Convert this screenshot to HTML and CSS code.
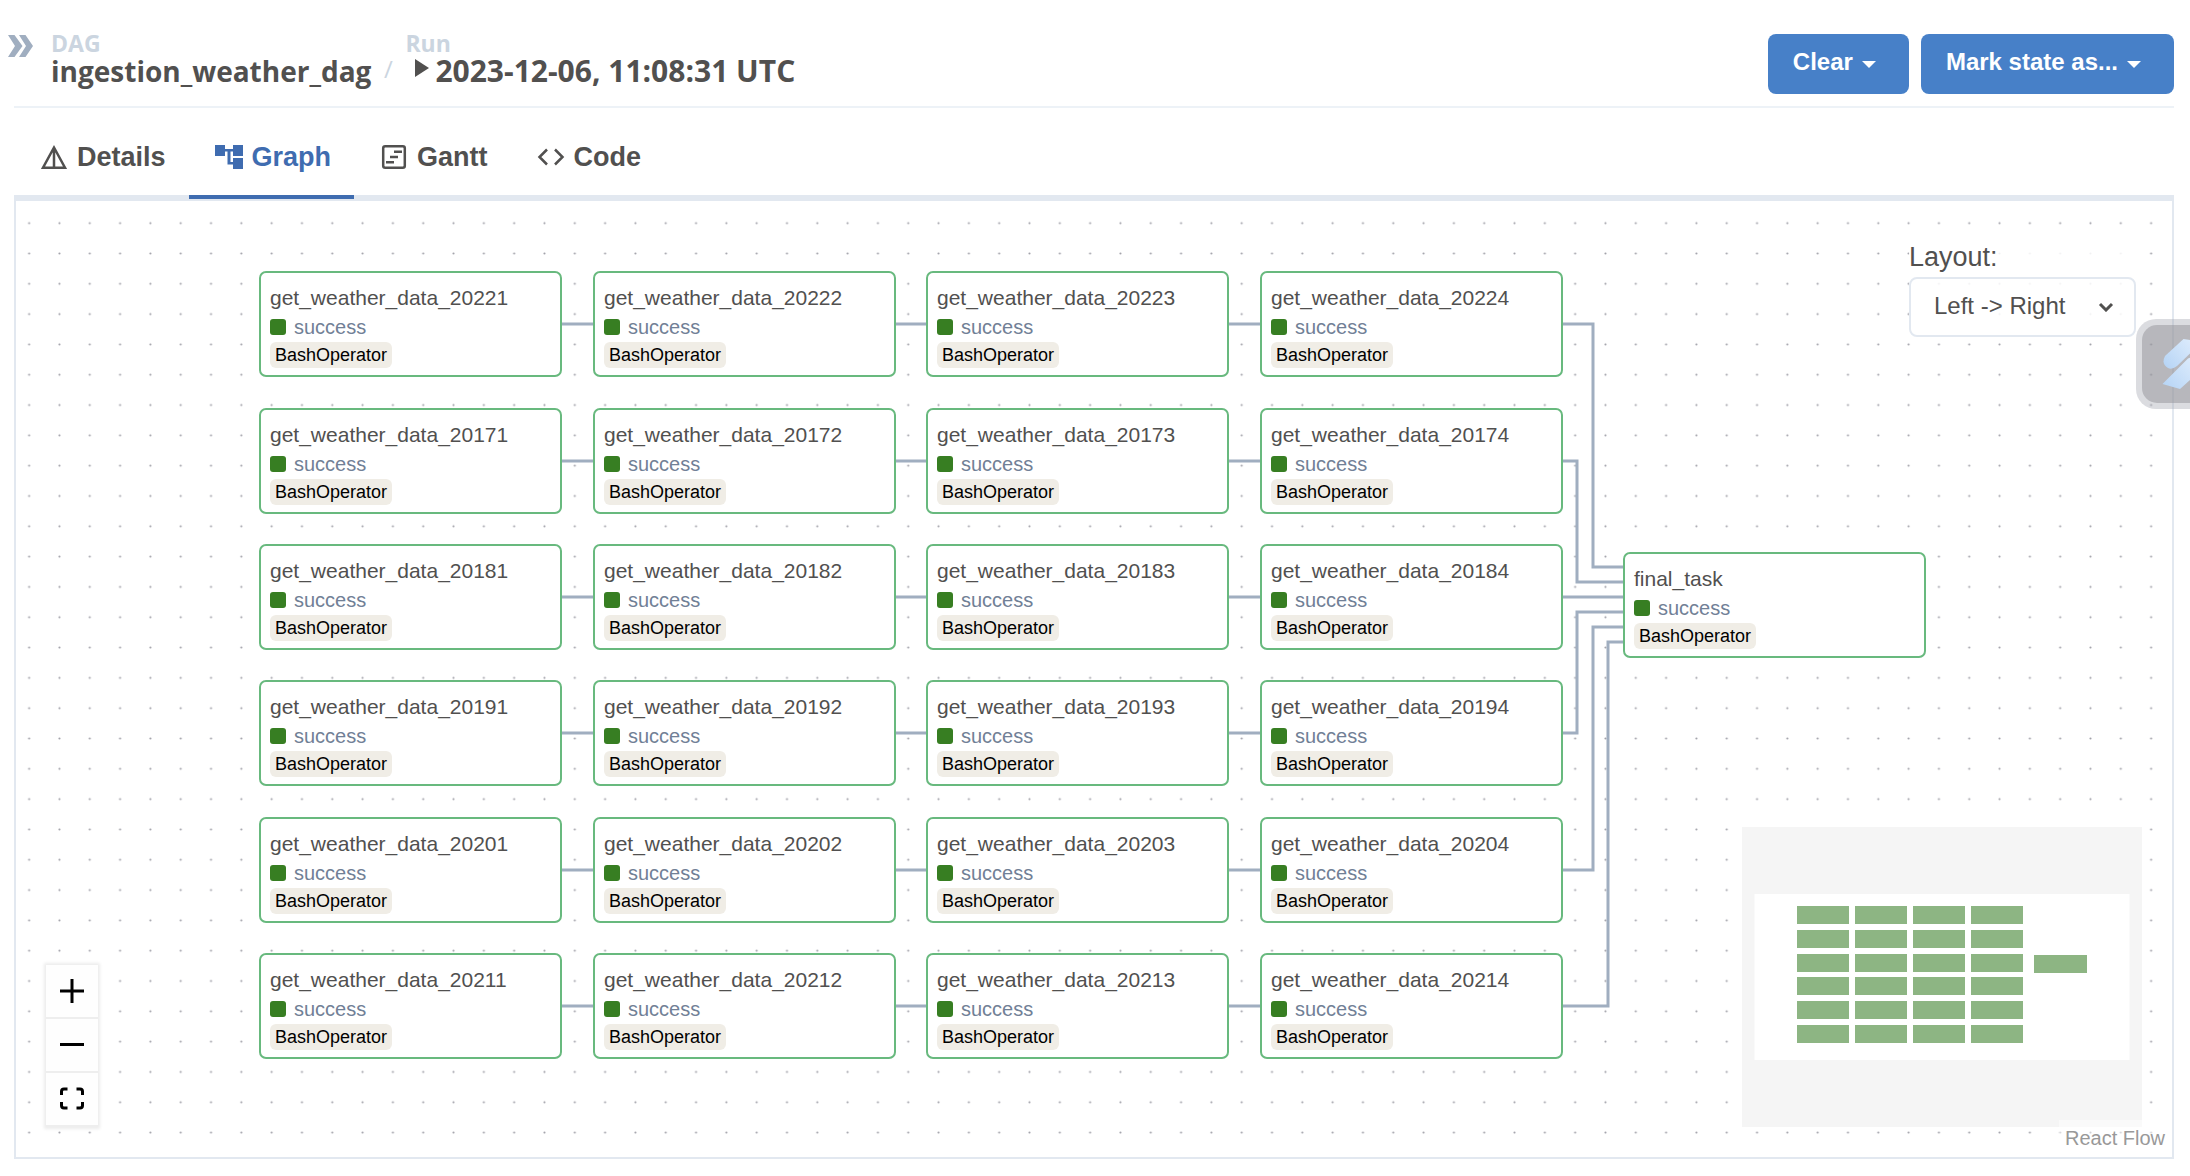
FILE: index.html
```html
<!DOCTYPE html>
<html lang="en">
<head>
<meta charset="utf-8">
<title>ingestion_weather_dag - Airflow</title>
<link rel="stylesheet" href="styles.css">
</head>
<body>
<header class="header">
  <button class="expand" aria-label="Show grid"><svg width="25" height="22" viewBox="0 0 25 22"><path d="M0 0h6.500l8 11-8 11H0l7-11zM11 0h6.500l7.500 11-7.500 11H11l7-11z"/></svg></button>
  <nav class="crumbs" aria-label="Breadcrumb">
    <a class="crumb" href="#"><span class="crumb-label">DAG</span><span class="crumb-title">ingestion_weather_dag</span></a>
    <span class="slash">/</span>
    <a class="crumb" href="#"><span class="crumb-label">Run</span><span class="crumb-title run"><svg class="play" width="14" height="18" viewBox="0 0 14 18"><path d="M0 0l14 9L0 18z"/></svg>2023-12-06, 11:08:31 UTC</span></a>
  </nav>
  <div class="actions">
    <button class="btn">Clear<span class="caret"></span></button>
    <button class="btn">Mark state as...<span class="caret"></span></button>
  </div>
</header>
<hr class="rule">
<main class="panel">
  <div class="tabs" role="tablist">
    <button class="tab" role="tab"><svg width="28" height="28" viewBox="0 0 28 28" fill="none" stroke="currentColor" stroke-width="2.500"><path d="M14 4.500L3 24.700h22zM14 5v19"/></svg>Details</button>
    <button class="tab active" role="tab" aria-selected="true"><svg width="28" height="28" viewBox="0 0 28 28" fill="currentColor"><path d="M0 2h10v4h8V2h10v11H18V8.500h-2.500V19H18v-4h10v11H18v-4.500h-5.500v-13H10V13H0z"/></svg>Graph</button>
    <button class="tab" role="tab"><svg width="28" height="28" viewBox="0 0 28 28" fill="none" stroke="currentColor" stroke-width="2.500"><rect x="3.200" y="3.200" width="21.600" height="21.600" rx="2"/><path d="M14 8.700h8M10 14h8M6 19.300h8"/></svg>Gantt</button>
    <button class="tab" role="tab"><svg width="28" height="28" viewBox="0 0 28 28" fill="none" stroke="currentColor" stroke-width="2.500"><path d="M10 6.500L2.500 14l7.500 7.500M18 6.500l7.500 7.500-7.500 7.500"/></svg>Code</button>
  </div>
  <section class="flow">
    <svg class="layer" width="100%" height="100%">
      <defs><pattern id="dots" width="20" height="20" patternUnits="userSpaceOnUse" patternTransform="translate(-2 7) scale(1.5157)"><circle cx="10" cy="10" r="0.700" fill="#a0a0a8"/></pattern></defs>
      <rect width="100%" height="100%" fill="url(#dots)"/>
      <g class="edges">
        <path d="M546 123h31M879 123h31M1213 123h31"/>
        <path d="M546 260h31M879 260h31M1213 260h31"/>
        <path d="M546 396h31M879 396h31M1213 396h31"/>
        <path d="M546 532h31M879 532h31M1213 532h31"/>
        <path d="M546 669h31M879 669h31M1213 669h31"/>
        <path d="M546 805h31M879 805h31M1213 805h31"/>
        <path d="M1546 123H1577V366H1608"/>
        <path d="M1546 260H1561V381H1608"/>
        <path d="M1546 396H1608"/>
        <path d="M1546 532H1561V411H1608"/>
        <path d="M1546 669H1577V426H1608"/>
        <path d="M1546 805H1592V441H1608"/>
      </g>
    </svg>
    <div class="node c1 r1"><span class="name">get_weather_data_20221</span><span class="state">success</span><span class="op">BashOperator</span></div>
    <div class="node c2 r1"><span class="name">get_weather_data_20222</span><span class="state">success</span><span class="op">BashOperator</span></div>
    <div class="node c3 r1"><span class="name">get_weather_data_20223</span><span class="state">success</span><span class="op">BashOperator</span></div>
    <div class="node c4 r1"><span class="name">get_weather_data_20224</span><span class="state">success</span><span class="op">BashOperator</span></div>
    <div class="node c1 r2"><span class="name">get_weather_data_20171</span><span class="state">success</span><span class="op">BashOperator</span></div>
    <div class="node c2 r2"><span class="name">get_weather_data_20172</span><span class="state">success</span><span class="op">BashOperator</span></div>
    <div class="node c3 r2"><span class="name">get_weather_data_20173</span><span class="state">success</span><span class="op">BashOperator</span></div>
    <div class="node c4 r2"><span class="name">get_weather_data_20174</span><span class="state">success</span><span class="op">BashOperator</span></div>
    <div class="node c1 r3"><span class="name">get_weather_data_20181</span><span class="state">success</span><span class="op">BashOperator</span></div>
    <div class="node c2 r3"><span class="name">get_weather_data_20182</span><span class="state">success</span><span class="op">BashOperator</span></div>
    <div class="node c3 r3"><span class="name">get_weather_data_20183</span><span class="state">success</span><span class="op">BashOperator</span></div>
    <div class="node c4 r3"><span class="name">get_weather_data_20184</span><span class="state">success</span><span class="op">BashOperator</span></div>
    <div class="node c1 r4"><span class="name">get_weather_data_20191</span><span class="state">success</span><span class="op">BashOperator</span></div>
    <div class="node c2 r4"><span class="name">get_weather_data_20192</span><span class="state">success</span><span class="op">BashOperator</span></div>
    <div class="node c3 r4"><span class="name">get_weather_data_20193</span><span class="state">success</span><span class="op">BashOperator</span></div>
    <div class="node c4 r4"><span class="name">get_weather_data_20194</span><span class="state">success</span><span class="op">BashOperator</span></div>
    <div class="node c1 r5"><span class="name">get_weather_data_20201</span><span class="state">success</span><span class="op">BashOperator</span></div>
    <div class="node c2 r5"><span class="name">get_weather_data_20202</span><span class="state">success</span><span class="op">BashOperator</span></div>
    <div class="node c3 r5"><span class="name">get_weather_data_20203</span><span class="state">success</span><span class="op">BashOperator</span></div>
    <div class="node c4 r5"><span class="name">get_weather_data_20204</span><span class="state">success</span><span class="op">BashOperator</span></div>
    <div class="node c1 r6"><span class="name">get_weather_data_20211</span><span class="state">success</span><span class="op">BashOperator</span></div>
    <div class="node c2 r6"><span class="name">get_weather_data_20212</span><span class="state">success</span><span class="op">BashOperator</span></div>
    <div class="node c3 r6"><span class="name">get_weather_data_20213</span><span class="state">success</span><span class="op">BashOperator</span></div>
    <div class="node c4 r6"><span class="name">get_weather_data_20214</span><span class="state">success</span><span class="op">BashOperator</span></div>
    <div class="node final"><span class="name">final_task</span><span class="state">success</span><span class="op">BashOperator</span></div>

    <div class="layout-box">
      <label for="layout">Layout:</label>
      <div class="select-wrap">
        <select id="layout"><option>Left -&gt; Right</option></select>
        <svg class="chevron" width="16" height="10" viewBox="0 0 16 10"><path d="M2 2l6 6 6-6"/></svg>
      </div>
    </div>

    <div class="controls">
      <button aria-label="Zoom in"><svg width="24" height="24" viewBox="0 0 24 24"><path d="M0 12h24M12 0v24"/></svg></button>
      <button aria-label="Zoom out"><svg width="24" height="24" viewBox="0 0 24 24"><path d="M0 11.500h24"/></svg></button>
      <button aria-label="Fit view"><svg width="24" height="24" viewBox="0 0 24 24"><path d="M1.500 8V4.500q0-2.500 2.500-2.500h3.500M16.500 2H20q2.500 0 2.500 2.500V8M22.500 15v3.500q0 2.500-2.500 2.500h-3.500M7.500 21H4q-2.500 0-2.500-2.500V15"/></svg></button>
    </div>

    <svg class="minimap" width="400" height="300" viewBox="0 0 400 300" role="img" aria-label="Mini map">
      <rect width="400" height="300" fill="#f5f5f5"/>
      <rect x="12.500" y="67" width="375" height="166" fill="#fff"/>
      <defs><g id="map-row"><path d="M55 0h52v18H55zM113 0h52v18h-52zM171 0h52v18h-52zM229 0h52v18h-52z"/></g></defs>
      <g fill="#8db583">
        <use href="#map-row" y="79"/><use href="#map-row" y="103"/><use href="#map-row" y="127"/>
        <use href="#map-row" y="150"/><use href="#map-row" y="174"/><use href="#map-row" y="198"/>
        <rect x="292" y="128" width="53" height="18"/>
      </g>
    </svg>
    <a class="attribution" href="#">React Flow</a>
  </section>
</main>
<button class="widget" aria-label="Open assistant">
  <svg width="48" height="78" viewBox="6 6 48 78">
    <defs><linearGradient id="ice" x1="0" y1="1" x2="1" y2="0"><stop offset="0" stop-color="#b4d3f5"/><stop offset="1" stop-color="#dcebfc"/></linearGradient></defs>
    <path fill="url(#ice)" d="M29 37L47.500 20l7 1v13L41 47q-5 4-9 2-7-4-3-12z"/>
    <path fill="url(#ice)" d="M26.500 65L52 39.500l3-1V60L44 70z"/>
  </svg>
</button>
</body>
</html>
```
FILE: styles.css
```css
* { box-sizing: border-box; }

body {
  margin: 0;
  min-height: 100vh;
  display: flex;
  flex-direction: column;
  background: #fff;
  color: #51504f;
  font-family: "Liberation Sans", Arial, sans-serif;
  overflow-x: hidden;
}

button { font: inherit; color: inherit; border: 0; background: none; padding: 0; cursor: pointer; }
a { color: inherit; text-decoration: none; }
svg { display: block; flex: none; }

.header { display: flex; align-items: flex-start; padding: 30px 16px 12px 8px; }
.expand { margin: 5px 18px 0 0; fill: #a0aec0; }
.crumbs { display: flex; font-family: "Open Sans", "Noto Sans", sans-serif; }
.crumb { display: block; font-weight: 700; white-space: nowrap; }
.crumb-label { display: block; font-size: 23px; line-height: 26px; color: #cbd5e0; }
.crumb-title { display: block; font-size: 28px; line-height: 30px; }
.slash { align-self: flex-end; width: 34px; text-align: center; font-size: 24px; line-height: 34px; color: #cbd5e0; }
.run { display: flex; gap: 6px; padding-left: 10px; font-size: 30px; }
.play { fill: #51504f; margin-top: 3px; }

.actions { display: flex; gap: 12px; margin: 4px 0 0 auto; }
.btn {
  display: flex;
  align-items: center;
  gap: 9px;
  height: 60px;
  padding: 0 33px 4px 25px;
  border-radius: 8px;
  background: #4780c8;
  color: #fff;
  font-size: 24px;
  font-weight: 700;
}
.caret { border: 7px solid transparent; border-top-color: #fff; border-bottom: 0; margin-top: 4px; }

.rule { width: auto; height: 2px; margin: 0 16px 0 14px; border: 0; background: #edf2f7; }

.panel { flex: 1; display: flex; flex-direction: column; padding: 11px 16px 17px 14px; }
.tabs { display: flex; border-bottom: 4px solid #e2e8f0; }
.tab {
  display: flex;
  align-items: center;
  gap: 9px;
  height: 80px;
  margin-bottom: -4px;
  padding: 0 23px 0 26px;
  border-bottom: 4px solid transparent;
  font-size: 27px;
  font-weight: 700;
}
.active { color: #3f6cb0; border-color: #3f6cb0; }

.flow { position: relative; flex: 1; min-height: 900px; border: 2px solid #e2e8f0; overflow: hidden; }
.layer { position: absolute; inset: 0; }
.edges { fill: none; stroke: #a0aec0; stroke-width: 3; }

.node {
  position: absolute;
  display: flex;
  flex-direction: column;
  align-items: flex-start;
  width: 303px;
  height: 106px;
  padding: 9px;
  border: 2px solid #68b97e;
  border-radius: 7px;
  background: #fff;
}
.c1 { left: 243px; }
.c2 { left: 577px; }
.c3 { left: 910px; }
.c4 { left: 1244px; }
.r1 { top: 70px; }
.r2 { top: 207px; }
.r3 { top: 343px; }
.r4 { top: 479px; }
.r5 { top: 616px; }
.r6 { top: 752px; }
.final { left: 1607px; top: 351px; }
.name { font-size: 21px; line-height: 32px; }
.state { display: flex; align-items: center; gap: 8px; font-size: 20px; line-height: 26px; color: #718096; }
.state::before { content: ""; width: 16px; height: 16px; border-radius: 3px; background: #377e22; }
.op { margin-top: 2px; padding: 0 5px; border-radius: 6px; background: #f0ede6; color: #000; font-size: 18px; line-height: 26px; }

.layout-box { position: absolute; top: 38px; right: 36px; background: rgba(255, 255, 255, .85); }
.layout-box label { display: block; margin-bottom: 2px; font-size: 27px; line-height: 36px; }
.select-wrap { position: relative; }
.select-wrap select {
  appearance: none;
  display: block;
  width: 227px;
  height: 60px;
  padding: 0 48px 4px 23px;
  border: 2px solid #e2e8f0;
  border-radius: 8px;
  background: transparent;
  color: inherit;
  font: 24px "Liberation Sans", Arial, sans-serif;
}
.chevron { position: absolute; right: 22px; top: 25px; fill: none; stroke: #51504f; stroke-width: 3; pointer-events: none; }

.controls { position: absolute; left: 30px; bottom: 30px; box-shadow: 0 0 3px 2px rgba(0, 0, 0, .08); }
.controls button { display: flex; align-items: center; justify-content: center; width: 52px; height: 54px; background: #fefefe; border-bottom: 2px solid #eee; }
.controls path { fill: none; stroke: #000; stroke-width: 3; }

.minimap { position: absolute; right: 30px; bottom: 30px; }
.attribution { position: absolute; right: 0; bottom: 0; padding: 2px 7px 2px 6px; background: rgba(255, 255, 255, .5); color: #999; font-size: 20px; line-height: 33px; }

.widget {
  position: fixed;
  right: 0;
  top: 319px;
  padding: 6px 0 6px 6px;
  border-radius: 20px 0 0 20px;
  background: rgba(165, 167, 177, .4);
}
.widget svg { border-radius: 15px 0 0 15px; background: rgba(140, 140, 144, .45); }
```
